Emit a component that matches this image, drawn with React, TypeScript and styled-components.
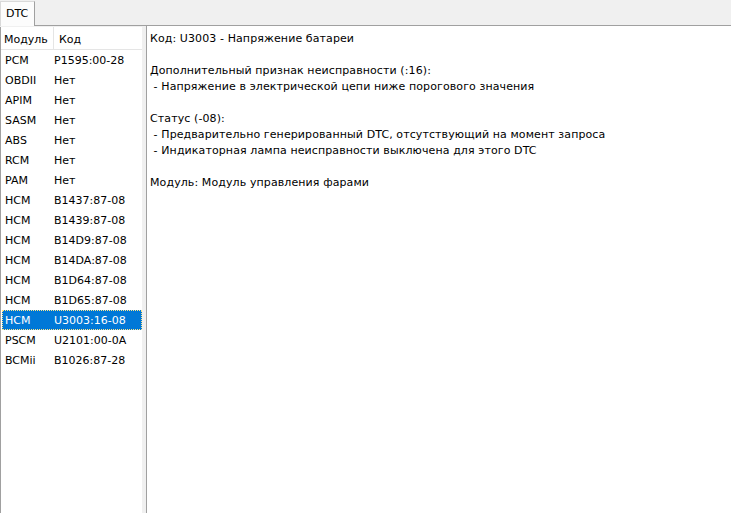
import React from "react";
import styled, { createGlobalStyle } from "styled-components";

const Global = createGlobalStyle`
  html, body { margin: 0; padding: 0; }
  body {
    width: 731px;
    height: 513px;
    overflow: hidden;
    background: #f0f0f0;
    font-family: "DejaVu Sans", "Liberation Sans", sans-serif;
    font-size: 11px;
    color: #000;
  }
`;

const Window = styled.div`
  width: 731px;
  height: 513px;
  display: flex;
  flex-direction: column;
  background: #f0f0f0;
`;

const TabBar = styled.div`
  height: 26px;
  display: flex;
  align-items: flex-end;
  border-bottom: 1px solid #a0a0a0;
  box-sizing: border-box;
`;

const Tab = styled.div`
  width: 35px;
  height: 25px;
  box-sizing: border-box;
  padding: 5px 0 0 5px;
  background: #fcfcfc;
  border: 1px solid #d9d9d9;
  border-right: 1px solid #a0a0a0;
  border-bottom: none;
  margin-bottom: -1px;
`;

const Body = styled.div`
  flex: 1;
  display: flex;
  min-height: 0;
`;

const ListBox = styled.div`
  width: 142px;
  margin-top: 1px;
  background: #fff;
  border-left: 1px solid #a0a0a0;
  box-sizing: border-box;
  display: flex;
  flex-direction: column;
`;

const HeaderRow = styled.div`
  display: flex;
  height: 23px;
  box-sizing: border-box;
`;

const HeaderCell = styled.div<{ $w: number }>`
  width: ${(p) => (p.$w ? `${p.$w}px` : "auto")};
  flex: ${(p) => (p.$w ? "none" : "1")};
  box-sizing: border-box;
  background: #fff;
  border-right: 1px solid #e5e5e5;
  border-bottom: 1px solid #e5e5e5;
  padding: 6px 0 0 3px;
  &:last-child { border-right: none; padding-left: 5px; }
`;

const Row = styled.div<{ $sel?: boolean }>`
  display: flex;
  height: 20px;
  line-height: 20px;
  padding-top: 1px;
  box-sizing: border-box;
  margin-left: 1px;
  position: relative;
  background: ${(p) => (p.$sel ? "#0078d7" : "transparent")};
  color: ${(p) => (p.$sel ? "#fff" : "#000")};
  ${(p) =>
    p.$sel
      ? `&::after { content: ""; position: absolute; inset: 0; border: 1px dotted #ffe58a; }`
      : ""}
`;

const Cell = styled.div<{ $w?: number }>`
  width: ${(p) => (p.$w ? `${p.$w}px` : "auto")};
  padding-left: 3px;
  box-sizing: border-box;
  white-space: nowrap;
`;

const Detail = styled.div`
  flex: 1;
  margin-left: 4px;
  background: #fff;
  border-left: 1px solid #a0a0a0;
  padding: 5px 0 0 3px;
  line-height: 16px;
  white-space: pre;
  letter-spacing: 0.1px;
`;

const Line = styled.div`
  height: 16px;
`;

const rows: [string, string][] = [
  ["PCM", "P1595:00-28"],
  ["OBDII", "Нет"],
  ["APIM", "Нет"],
  ["SASM", "Нет"],
  ["ABS", "Нет"],
  ["RCM", "Нет"],
  ["PAM", "Нет"],
  ["HCM", "B1437:87-08"],
  ["HCM", "B1439:87-08"],
  ["HCM", "B14D9:87-08"],
  ["HCM", "B14DA:87-08"],
  ["HCM", "B1D64:87-08"],
  ["HCM", "B1D65:87-08"],
  ["HCM", "U3003:16-08"],
  ["PSCM", "U2101:00-0A"],
  ["BCMii", "B1026:87-28"],
];

const lines = [
  "Код: U3003 - Напряжение батареи",
  "",
  "Дополнительный признак неисправности (:16):",
  " - Напряжение в электрической цепи ниже порогового значения",
  "",
  "Статус (-08):",
  " - Предварительно генерированный DTC, отсутствующий на момент запроса",
  " - Индикаторная лампа неисправности выключена для этого DTC",
  "",
  "Модуль: Модуль управления фарами",
];

export default function App() {
  return (
    <>
      <Global />
      <Window>
        <TabBar>
          <Tab>DTC</Tab>
        </TabBar>
        <Body>
          <ListBox>
            <HeaderRow>
              <HeaderCell $w={53}>Модуль</HeaderCell>
              <HeaderCell $w={0}>Код</HeaderCell>
            </HeaderRow>
            {rows.map(([m, c], i) => (
              <Row key={i} $sel={i === 13}>
                <Cell $w={49}>{m}</Cell>
                <Cell>{c}</Cell>
              </Row>
            ))}
          </ListBox>
          <Detail>
            {lines.map((l, i) => (
              <Line key={i}>{l}</Line>
            ))}
          </Detail>
        </Body>
      </Window>
    </>
  );
}
